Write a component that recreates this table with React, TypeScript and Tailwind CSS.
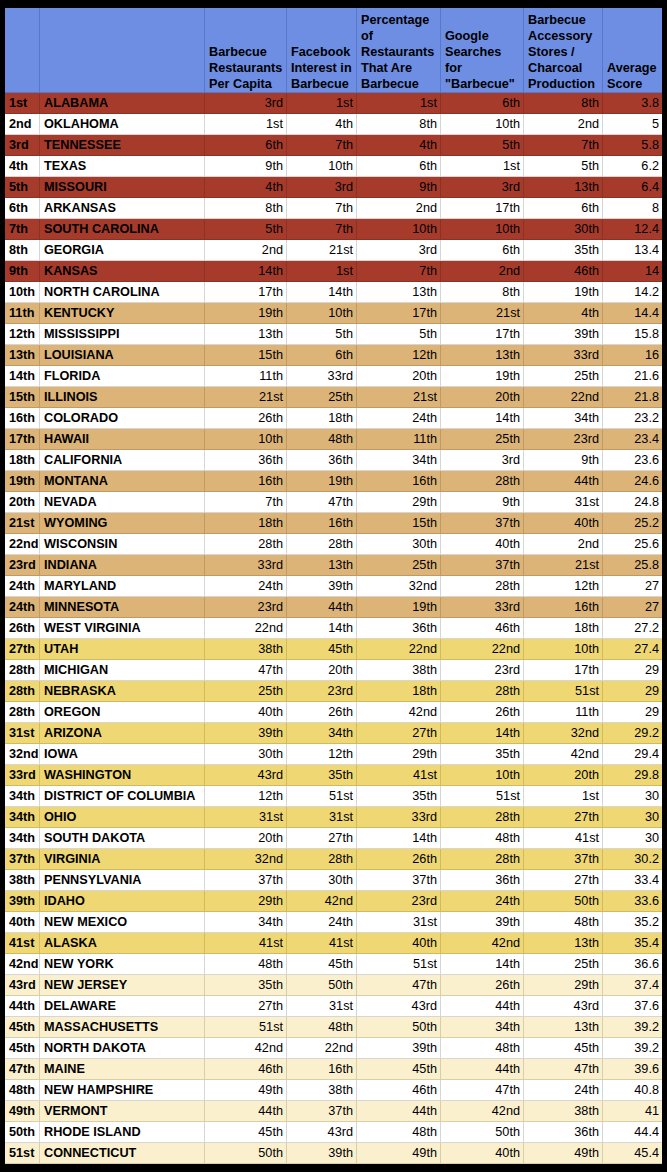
import React from "react";

type Row = [string, string, string, string, string, string, string, string];

const rows: Row[] = [
  ["1st", "ALABAMA", "3rd", "1st", "1st", "6th", "8th", "3.8"],
  ["2nd", "OKLAHOMA", "1st", "4th", "8th", "10th", "2nd", "5"],
  ["3rd", "TENNESSEE", "6th", "7th", "4th", "5th", "7th", "5.8"],
  ["4th", "TEXAS", "9th", "10th", "6th", "1st", "5th", "6.2"],
  ["5th", "MISSOURI", "4th", "3rd", "9th", "3rd", "13th", "6.4"],
  ["6th", "ARKANSAS", "8th", "7th", "2nd", "17th", "6th", "8"],
  ["7th", "SOUTH CAROLINA", "5th", "7th", "10th", "10th", "30th", "12.4"],
  ["8th", "GEORGIA", "2nd", "21st", "3rd", "6th", "35th", "13.4"],
  ["9th", "KANSAS", "14th", "1st", "7th", "2nd", "46th", "14"],
  ["10th", "NORTH CAROLINA", "17th", "14th", "13th", "8th", "19th", "14.2"],
  ["11th", "KENTUCKY", "19th", "10th", "17th", "21st", "4th", "14.4"],
  ["12th", "MISSISSIPPI", "13th", "5th", "5th", "17th", "39th", "15.8"],
  ["13th", "LOUISIANA", "15th", "6th", "12th", "13th", "33rd", "16"],
  ["14th", "FLORIDA", "11th", "33rd", "20th", "19th", "25th", "21.6"],
  ["15th", "ILLINOIS", "21st", "25th", "21st", "20th", "22nd", "21.8"],
  ["16th", "COLORADO", "26th", "18th", "24th", "14th", "34th", "23.2"],
  ["17th", "HAWAII", "10th", "48th", "11th", "25th", "23rd", "23.4"],
  ["18th", "CALIFORNIA", "36th", "36th", "34th", "3rd", "9th", "23.6"],
  ["19th", "MONTANA", "16th", "19th", "16th", "28th", "44th", "24.6"],
  ["20th", "NEVADA", "7th", "47th", "29th", "9th", "31st", "24.8"],
  ["21st", "WYOMING", "18th", "16th", "15th", "37th", "40th", "25.2"],
  ["22nd", "WISCONSIN", "28th", "28th", "30th", "40th", "2nd", "25.6"],
  ["23rd", "INDIANA", "33rd", "13th", "25th", "37th", "21st", "25.8"],
  ["24th", "MARYLAND", "24th", "39th", "32nd", "28th", "12th", "27"],
  ["24th", "MINNESOTA", "23rd", "44th", "19th", "33rd", "16th", "27"],
  ["26th", "WEST VIRGINIA", "22nd", "14th", "36th", "46th", "18th", "27.2"],
  ["27th", "UTAH", "38th", "45th", "22nd", "22nd", "10th", "27.4"],
  ["28th", "MICHIGAN", "47th", "20th", "38th", "23rd", "17th", "29"],
  ["28th", "NEBRASKA", "25th", "23rd", "18th", "28th", "51st", "29"],
  ["28th", "OREGON", "40th", "26th", "42nd", "26th", "11th", "29"],
  ["31st", "ARIZONA", "39th", "34th", "27th", "14th", "32nd", "29.2"],
  ["32nd", "IOWA", "30th", "12th", "29th", "35th", "42nd", "29.4"],
  ["33rd", "WASHINGTON", "43rd", "35th", "41st", "10th", "20th", "29.8"],
  ["34th", "DISTRICT OF COLUMBIA", "12th", "51st", "35th", "51st", "1st", "30"],
  ["34th", "OHIO", "31st", "31st", "33rd", "28th", "27th", "30"],
  ["34th", "SOUTH DAKOTA", "20th", "27th", "14th", "48th", "41st", "30"],
  ["37th", "VIRGINIA", "32nd", "28th", "26th", "28th", "37th", "30.2"],
  ["38th", "PENNSYLVANIA", "37th", "30th", "37th", "36th", "27th", "33.4"],
  ["39th", "IDAHO", "29th", "42nd", "23rd", "24th", "50th", "33.6"],
  ["40th", "NEW MEXICO", "34th", "24th", "31st", "39th", "48th", "35.2"],
  ["41st", "ALASKA", "41st", "41st", "40th", "42nd", "13th", "35.4"],
  ["42nd", "NEW YORK", "48th", "45th", "51st", "14th", "25th", "36.6"],
  ["43rd", "NEW JERSEY", "35th", "50th", "47th", "26th", "29th", "37.4"],
  ["44th", "DELAWARE", "27th", "31st", "43rd", "44th", "43rd", "37.6"],
  ["45th", "MASSACHUSETTS", "51st", "48th", "50th", "34th", "13th", "39.2"],
  ["45th", "NORTH DAKOTA", "42nd", "22nd", "39th", "48th", "45th", "39.2"],
  ["47th", "MAINE", "46th", "16th", "45th", "44th", "47th", "39.6"],
  ["48th", "NEW HAMPSHIRE", "49th", "38th", "46th", "47th", "24th", "40.8"],
  ["49th", "VERMONT", "44th", "37th", "44th", "42nd", "38th", "41"],
  ["50th", "RHODE ISLAND", "45th", "43rd", "48th", "50th", "36th", "44.4"],
  ["51st", "CONNECTICUT", "50th", "39th", "49th", "40th", "49th", "45.4"],
];

const headers = [
  "",
  "",
  "Barbecue Restaurants Per Capita",
  "Facebook Interest in Barbecue",
  "Percentage of Restaurants That Are Barbecue",
  "Google Searches for \"Barbecue\"",
  "Barbecue Accessory Stores / Charcoal Production",
  "Average Score",
];

function rowStyle(i: number): { bg: string; border: string } {
  const n = i + 1;
  if (n % 2 === 0) return { bg: "bg-white", border: "border-[#d6d6d6]" };
  if (n <= 9) return { bg: "bg-[#a63b2c]", border: "border-[#8c3225]" };
  if (n <= 25) return { bg: "bg-[#ddb478]", border: "border-[#c09a62]" };
  if (n <= 41) return { bg: "bg-[#efd773]", border: "border-[#d2bb5e]" };
  return { bg: "bg-[#fbf0cd]", border: "border-[#d9cfa7]" };
}

export default function App() {
  return (
    <div
      className="w-[667px] h-[1172px] bg-black pt-[8px] pl-[5px] text-black"
      style={{ fontFamily: '"Liberation Sans", Arial, sans-serif' }}
    >
      <div className="w-[657px] grid grid-cols-[35px_165px_82px_70px_84px_83px_79px_59px] text-[12.7px]">
        {headers.map((h, c) => (
          <div
            key={"h" + c}
            className={`h-[85px] bg-[#6d8ee3] border-b border-[#5877c9] ${
              c < 7 ? "border-r" : ""
            } flex items-end pl-[4px] pr-[2px] pb-0 font-bold leading-[16px]`}
          >
            <span>{h}</span>
          </div>
        ))}
        {rows.map((r, i) => {
          const s = rowStyle(i);
          return r.map((v, c) => (
            <div
              key={i + "-" + c}
              className={`h-[21px] ${s.bg} ${s.border} border-b ${
                c < 7 ? "border-r" : ""
              } flex items-center pt-[2px] whitespace-nowrap ${
                c < 2
                  ? "pl-[4px] font-bold justify-start"
                  : "pr-[3px] justify-end"
              }`}
            >
              {v}
            </div>
          ));
        })}
      </div>
    </div>
  );
}
